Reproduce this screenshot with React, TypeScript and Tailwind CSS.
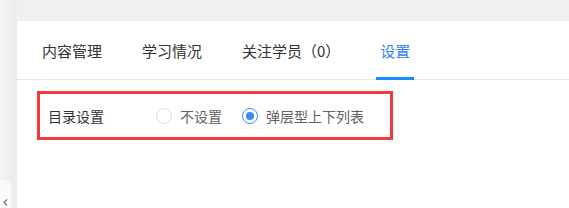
import { useState } from 'react';

const tabs = ['内容管理', '学习情况', '关注学员（0）', '设置'];

function Radio({ checked, label, onClick }: { checked: boolean; label: string; onClick: () => void }) {
  return (
    <label className="flex items-center cursor-pointer" onClick={onClick}>
      <span
        className={
          checked
            ? 'w-4 h-4 rounded-full border border-[#3d8af7] flex items-center justify-center'
            : 'w-4 h-4 rounded-full border border-[#dcdfe6] bg-white'
        }
      >
        {checked && <span className="w-2 h-2 rounded-full bg-[#3d8af7]" />}
      </span>
      <span className="ml-2 text-[#606266]">{label}</span>
    </label>
  );
}

export default function App() {
  const [mode, setMode] = useState('popup');

  return (
    <div
      className="flex w-[569px] h-[208px] bg-[#f0f0f2] overflow-hidden text-[14px]"
      style={{ fontFamily: '"Noto Sans CJK SC", "Noto Sans", sans-serif' }}
    >
      {/* Sidebar strip */}
      <aside className="relative w-[17px] shrink-0 bg-gradient-to-r from-[#f4f4f6] to-[#ececee]">
        <button className="absolute left-0 bottom-0 w-[11px] h-[28px] bg-[#fafafa] rounded-tr-[6px] flex items-end justify-center pb-[2px]">
          <svg width="5" height="7" viewBox="0 0 5 7" fill="none">
            <path d="M4 0.5L1 3.5L4 6.5" stroke="#777" strokeWidth="1.2" />
          </svg>
        </button>
      </aside>

      <main className="flex-1 flex flex-col pt-[21px]">
        <div className="flex-1 bg-white">
          {/* Tabs */}
          <nav className="h-[59px] border-b border-[#e8e8e8] flex gap-10 pl-[25px] pt-[3px]">
            {tabs.map((t, i) => {
              const active = i === 3;
              return (
                <div
                  key={t}
                  className={
                    active
                      ? 'relative h-full flex items-center text-[15px] text-[#2f83f2]'
                      : 'relative h-full flex items-center text-[15px] text-[#333]'
                  }
                >
                  {t}
                  {active && <span className="absolute -left-1 -right-1 -bottom-px h-[3px] bg-[#1a8cff]" />}
                </div>
              );
            })}
          </nav>

          {/* Settings row */}
          <div className="pt-[11px] pl-5">
            <div className="inline-flex items-center h-[49px] border-[3px] border-[#f03a3c] pl-[8px] pr-[26px] pt-[1px]">
              <span className="w-[108px] text-[#333]">目录设置</span>
              <Radio checked={mode === 'none'} label="不设置" onClick={() => setMode('none')} />
              <div className="ml-[20px]">
                <Radio checked={mode === 'popup'} label="弹层型上下列表" onClick={() => setMode('popup')} />
              </div>
            </div>
          </div>
        </div>
      </main>
    </div>
  );
}
